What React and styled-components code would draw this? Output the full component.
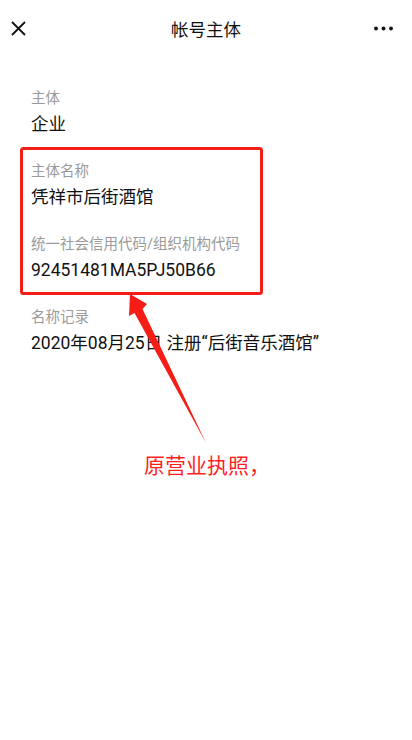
import React from "react";
import styled, { createGlobalStyle } from "styled-components";

const Global = createGlobalStyle`
  html, body { margin: 0; padding: 0; background: #fff; }
  body { font-family: Roboto, "Noto Sans CJK SC", sans-serif; }
`;

const Page = styled.div`
  position: relative;
  width: 412px;
  min-height: 740px;
  background: #fff;
`;

const Header = styled.header`
  height: 56px;
  display: grid;
  grid-template-columns: 56px 1fr 56px;
  align-items: center;
`;

const IconButton = styled.button`
  border: 0;
  background: none;
  padding: 0;
  height: 56px;
  display: flex;
  align-items: center;
  justify-content: ${(p) => (p.$end ? "flex-end" : "flex-start")};
  padding-left: ${(p) => (p.$end ? "0" : "11px")};
  padding-right: ${(p) => (p.$end ? "19px" : "0")};
`;

const Title = styled.h1`
  margin: 0;
  text-align: center;
  font-size: 17.5px;
  font-weight: 400;
  color: #111;
`;

const Content = styled.main`
  padding: 33px 31px 0;
  display: flex;
  flex-direction: column;
  gap: 25px;
`;

const Field = styled.section`
  display: flex;
  flex-direction: column;
  gap: 2px;
`;

const Label = styled.div`
  font-size: 14.5px;
  line-height: 20px;
  color: #9a9a9a;
`;

const Value = styled.div`
  font-size: 17.5px;
  line-height: 26px;
  color: #111;
`;

const Overlay = styled.svg`
  position: absolute;
  left: 0;
  top: 0;
  pointer-events: none;
`;

const Note = styled.div`
  position: absolute;
  left: 144px;
  top: 452px;
  font-size: 21px;
  line-height: 28px;
  color: #ff1f1f;
`;

const fields = [
  ["主体", "企业"],
  ["主体名称", "凭祥市后街酒馆"],
  ["统一社会信用代码/组织机构代码", "92451481MA5PJ50B66"],
  ["名称记录", "2020年08月25日 注册“后街音乐酒馆”"],
];

export default function App() {
  return (
    <Page>
      <Global />
      <Header>
        <IconButton aria-label="关闭">
          <svg width="15" height="15" viewBox="0 0 15 15">
            <path d="M1 1L14 14M14 1L1 14" stroke="#111" strokeWidth="1.8" fill="none" />
          </svg>
        </IconButton>
        <Title>帐号主体</Title>
        <IconButton $end aria-label="更多">
          <svg width="19" height="5" viewBox="0 0 19 5">
            <circle cx="2" cy="2.5" r="1.9" fill="#111" />
            <circle cx="9.5" cy="2.5" r="1.9" fill="#111" />
            <circle cx="17" cy="2.5" r="1.9" fill="#111" />
          </svg>
        </IconButton>
      </Header>
      <Content>
        {fields.map(([l, v]) => (
          <Field key={l}>
            <Label>{l}</Label>
            <Value>{v}</Value>
          </Field>
        ))}
      </Content>
      <Overlay width="412" height="740" viewBox="0 0 412 740">
        <rect x="21.5" y="148.5" width="240" height="145" rx="2" fill="none" stroke="#f41d17" strokeWidth="3" />
        <polygon
          points="130,294 147,304 142.5,309 206,443 134.5,313 129,316"
          fill="#f61d17"
        />
      </Overlay>
      <Note>原营业执照，</Note>
    </Page>
  );
}
